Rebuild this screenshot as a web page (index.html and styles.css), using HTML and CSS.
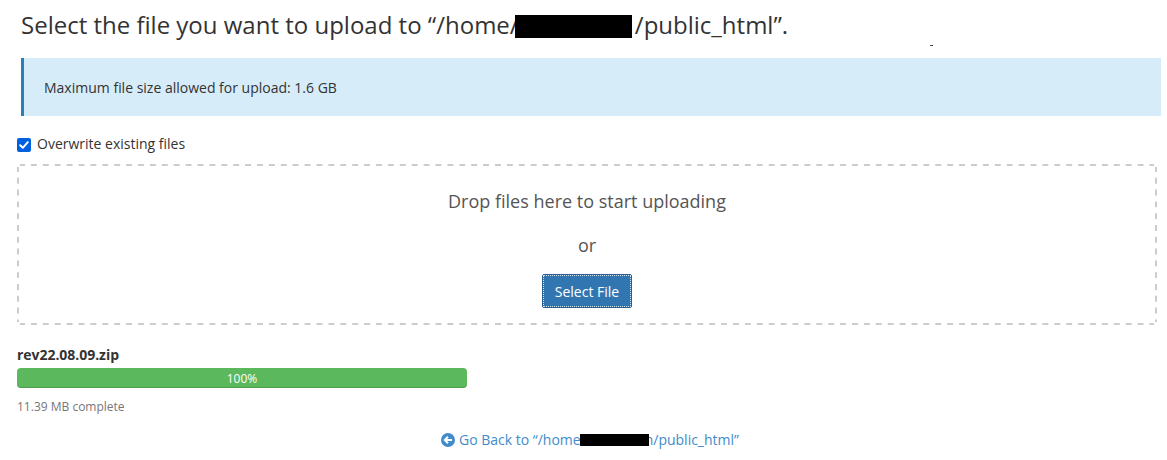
FILE: index.html
```html
<!DOCTYPE html>
<html lang="en">
<head>
<meta charset="utf-8">
<title>File Upload</title>
<link rel="stylesheet" href="styles.css">
</head>
<body>
<main class="page">
  <h1 class="title">Select the file you want to upload to “/home/<span class="mask mask-title"></span><span class="tail">n</span>/public_html”.<span class="speck"></span></h1>
  <div class="callout">Maximum file size allowed for upload: 1.6 GB</div>
  <label class="overwrite">
    <svg class="check" viewBox="0 0 14 14"><rect width="14" height="14" rx="2" fill="#0060df"/><path d="M3.2 7.2l2.6 2.6 5-5.6" fill="none" stroke="#fff" stroke-width="2" stroke-linecap="round" stroke-linejoin="round"/></svg>
    <span>Overwrite existing files</span>
  </label>
  <section class="dropzone">
    <svg class="outline" viewBox="0 0 1140 161"><g fill="none" stroke="#ccc" stroke-width="2" stroke-dashoffset="1"><path d="M3 1H1137M3 160H1137" stroke-dasharray="5.95 5.95"/><path d="M1 3V158M1139 3V158" stroke-dasharray="5.9 5.9"/></g></svg>
    <p class="hint">Drop files here to start uploading</p>
    <p class="hint">or</p>
    <button class="select"><span>Select File</span></button>
  </section>
  <section class="upload">
    <strong class="name">rev22.08.09.zip</strong>
    <div class="bar">100%</div>
    <small class="status">11.39 MB complete</small>
  </section>
  <a class="back"><svg class="arrow" viewBox="0 0 14 14"><circle cx="7" cy="7" r="7" fill="#428bca"/><path d="M11 7H4.2M7 3.8L3.8 7 7 10.2" fill="none" stroke="#fff" stroke-width="2"/></svg><span>Go Back to “/home<span class="mask mask-link"></span>n/public_html”</span></a>
</main>
</body>
</html>
```
FILE: styles.css
```css
* { box-sizing: border-box; }
body { margin: 0; background: #fff; color: #333; font: 14px/20px "Open Sans", sans-serif; }
.page { height: 460px; padding: 8px 6px 0 17px; display: flex; flex-direction: column; overflow: hidden; }
.title { position: relative; margin: 0 0 17px 4px; font-size: 24px; line-height: 33px; font-weight: 400; white-space: nowrap; }
.mask { position: relative; display: inline-block; background: #000; }
.mask-title { width: 117px; height: 23px; vertical-align: -4px; margin: 0 -13px 0 -4px; }
.tail { margin-right: 1.5px; }
.speck { position: absolute; left: 909px; top: 37px; width: 3px; height: 1px; background: #444; }
.callout { height: 58px; margin-left: 4px; padding: 20px; border-left: 3px solid #2980b9; background: #d7ecf9; }
.overwrite { display: flex; align-items: center; gap: 6px; height: 20px; margin-top: 18px; }
.check { width: 14px; height: 14px; margin-top: 2px; }
.dropzone { position: relative; width: 1140px; height: 161px; margin-top: 10px; padding-top: 25px; display: flex; flex-direction: column; align-items: center; }
.outline { position: absolute; left: 0; top: 0; width: 1140px; height: 161px; }
.hint { margin: 0 0 20px; font-size: 18px; line-height: 24px; color: #555; }
.select { width: 90px; height: 34px; margin-top: -3px; padding: 0; border: 1px solid #285e8e; border-radius: 2px; background: #3276b1; color: #fff; font: 14px/20px "Open Sans", sans-serif; }
.select span { display: block; height: 32px; padding-top: 6px; border: 1px dotted rgba(255,255,255,.8); }
.upload { display: flex; flex-direction: column; width: 450px; margin-top: 20px; }
.name { letter-spacing: -0.04px; }
.bar { height: 20px; margin-top: 3px; border-radius: 4px; background: #5cb85c; box-shadow: inset 0 -1px 0 rgba(0,0,0,.15); color: #fff; font-size: 12px; line-height: 22px; text-align: center; }
.status { margin-top: 9px; font-size: 12px; line-height: 20px; color: #777; }
.back { display: flex; align-items: center; gap: 4px; margin: 13px 0 0 424px; color: #428bca; white-space: nowrap; }
.arrow { width: 14px; height: 14px; margin-top: -1px; }
.mask-link { width: 69px; height: 12px; vertical-align: -1px; margin: 0 -4px 0 -1px; }
```
